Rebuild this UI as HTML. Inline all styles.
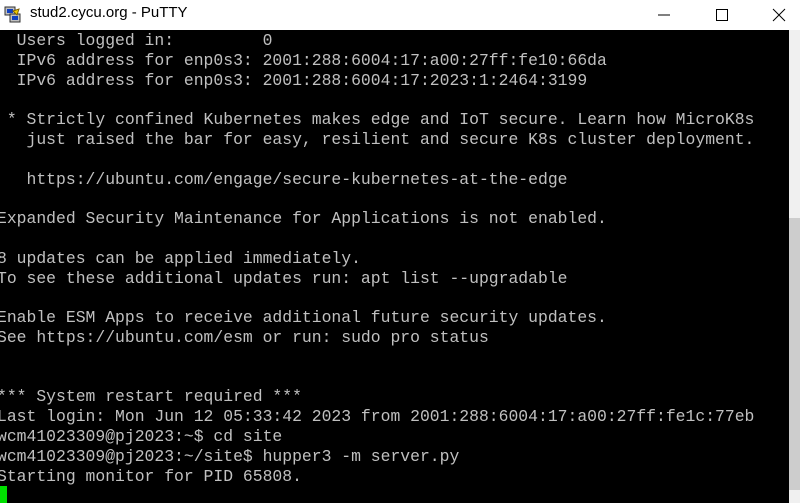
<!DOCTYPE html>
<html><head><style>
body{margin:0;width:800px;height:503px;overflow:hidden;background:#fff;position:relative;font-family:"Liberation Sans",sans-serif}
#title{position:absolute;left:0;top:0;width:800px;height:30px;background:#fff}
#title span{position:absolute;left:30px;top:4px;font-size:15px;color:#000}
#term{position:absolute;left:0;top:30px;width:789px;height:473px;background:#000;overflow:hidden}
pre{margin:0;position:absolute;left:-3px;top:1px;font-family:"Liberation Mono",monospace;font-size:16.4px;line-height:19.8px;color:#c0c0c0}
#sb{position:absolute;left:789px;top:30px;width:11px;height:473px;background:#f0f0f0}
#thumb{position:absolute;left:0;top:188px;width:11px;height:272px;background:#cdcdcd}
#cur{position:absolute;left:0;top:486px;width:7px;height:17px;background:#00e000}
</style></head><body>
<div id="title">
<svg style="position:absolute;left:4px;top:6px" width="20" height="18" viewBox="0 0 20 18"><rect x="1" y="1" width="10" height="8" fill="#c0c0c0" stroke="#333"/><rect x="3" y="3" width="6" height="4" fill="#1040c0"/><rect x="6" y="8" width="10" height="8" fill="#c0c0c0" stroke="#333"/><rect x="8" y="10" width="6" height="4" fill="#1040c0"/><path d="M9 5 L15 3 L13 9 Z" fill="#f0d000" stroke="#806000"/></svg>
<span>stud2.cycu.org - PuTTY</span>
<svg style="position:absolute;left:650px;top:5px" width="150" height="20"><line x1="8" y1="10" x2="20" y2="10" stroke="#000"/><rect x="716" y="5" width="0" height="0"/><rect x="66.5" y="4.5" width="11" height="11" fill="none" stroke="#000"/><path d="M123 4 L135 16 M135 4 L123 16" stroke="#000"/></svg>
</div>
<div id="term"><pre>  Users logged in:         0
  IPv6 address for enp0s3: 2001:288:6004:17:a00:27ff:fe10:66da
  IPv6 address for enp0s3: 2001:288:6004:17:2023:1:2464:3199

 * Strictly confined Kubernetes makes edge and IoT secure. Learn how MicroK8s
   just raised the bar for easy, resilient and secure K8s cluster deployment.

   https://ubuntu.com/engage/secure-kubernetes-at-the-edge

Expanded Security Maintenance for Applications is not enabled.

8 updates can be applied immediately.
To see these additional updates run: apt list --upgradable

Enable ESM Apps to receive additional future security updates.
See https://ubuntu.com/esm or run: sudo pro status


*** System restart required ***
Last login: Mon Jun 12 05:33:42 2023 from 2001:288:6004:17:a00:27ff:fe1c:77eb
wcm41023309@pj2023:~$ cd site
wcm41023309@pj2023:~/site$ hupper3 -m server.py
Starting monitor for PID 65808.</pre></div>
<div id="cur"></div>
<div id="sb"><div id="thumb"></div></div>
</body></html>
